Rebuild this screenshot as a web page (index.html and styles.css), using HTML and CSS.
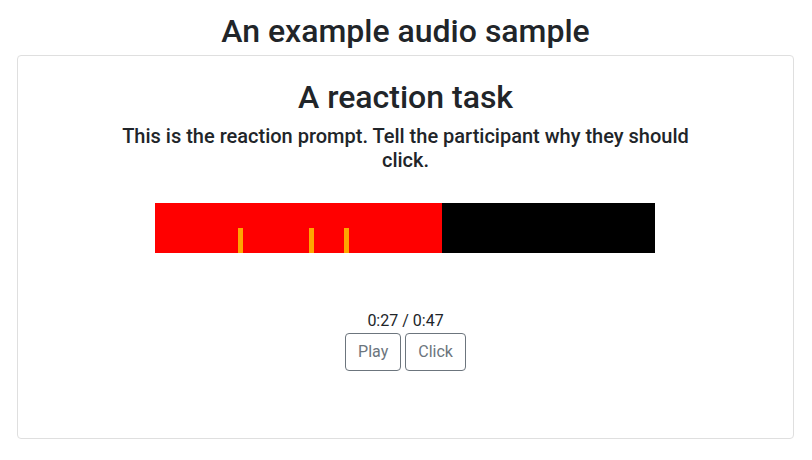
FILE: index.html
```html
<!DOCTYPE html>
<html>
<head>
<meta charset="utf-8">
<link rel="stylesheet" href="styles.css">
</head>
<body>
<div class="page">
  <h2 class="title">An example audio sample</h2>
  <div class="card">
    <h2 class="task-title">A reaction task</h2>
    <h5 class="prompt">This is the reaction prompt. Tell the participant why they should click.</h5>
    <div class="bar">
      <div class="progress" style="width: 287px"></div>
      <div class="marker" style="left: 83px"></div>
      <div class="marker" style="left: 154px"></div>
      <div class="marker" style="left: 189px"></div>
    </div>
    <div class="time">0:27 / 0:47</div>
    <div class="buttons">
      <button class="btn">Play</button>
      <button class="btn">Click</button>
    </div>
  </div>
</div>
</body>
</html>
```
FILE: styles.css
```css
html, body {
  margin: 0;
  padding: 0;
  background: #fff;
}
body {
  font-family: Roboto, "Liberation Sans", sans-serif;
  color: #212529;
  font-size: 16px;
  line-height: 1.5;
}
.page {
  padding: 12px 18px 0 17px;
}
.title {
  margin: 0 0 5px;
  font-size: 32px;
  font-weight: 500;
  line-height: 1.2;
  text-align: center;
}
.card {
  box-sizing: border-box;
  border: 1px solid #dfdfdf;
  border-radius: 4px;
  height: 384px;
  padding-top: 22px;
  display: flex;
  flex-direction: column;
  align-items: center;
}
.task-title {
  margin: 0;
  font-size: 32px;
  font-weight: 500;
  line-height: 1.2;
  text-align: center;
}
.prompt {
  margin: 7px 0 0;
  max-width: 600px;
  font-size: 20px;
  font-weight: 500;
  line-height: 1.2;
  text-align: center;
}
.bar {
  position: relative;
  width: 500px;
  height: 50px;
  background: #000;
  margin: 31px 2px 0 0;
}
.progress {
  height: 100%;
  background: #ff0000;
}
.marker {
  position: absolute;
  bottom: 0;
  width: 5px;
  height: 25px;
  background: #ffa500;
}
.time {
  margin-top: 56px;
  line-height: 24px;
}
.buttons {
  display: flex;
  gap: 4px;
}
.btn {
  font-family: inherit;
  font-size: 16px;
  line-height: 1.5;
  padding: 6px 12px;
  color: #6c757d;
  background: #fff;
  border: 1px solid #6c757d;
  border-radius: 4px;
}
```
